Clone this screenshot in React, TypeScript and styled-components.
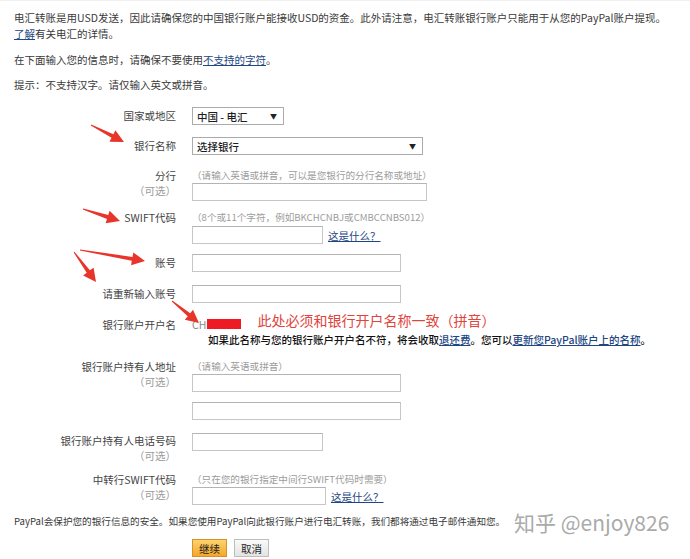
import React from "react";
import styled, { createGlobalStyle } from "styled-components";

const GlobalStyle = createGlobalStyle`
  html, body {
    margin: 0;
    padding: 0;
    background: #fff;
  }
  body {
    font-family: "Noto Sans CJK SC", "Liberation Sans", sans-serif;
    color: #333;
  }
`;

const Page = styled.div`
  position: relative;
  width: 690px;
  height: 559px;
  overflow: hidden;
  box-sizing: border-box;
  padding: 9px 14px 0;
  font-size: 10.5px;
  border-top: 1px solid #f0f0f0;
`;

const Intro = styled.p<{ $gap?: number }>`
  margin: ${(p) => p.$gap ?? 0}px 0 0;
  line-height: 16px;
  color: #3a3a3a;
`;

const TextLink = styled.a`
  color: #1d4683;
  text-decoration: underline;
  cursor: pointer;
`;

const Row = styled.div<{ $gap: number }>`
  display: grid;
  grid-template-columns: 162px 1fr;
  column-gap: 16px;
  align-items: start;
  margin-top: ${(p) => p.$gap}px;
`;

const LabelCell = styled.div`
  text-align: right;
  white-space: nowrap;
`;

const LabelText = styled.div<{ $tall?: boolean }>`
  color: #444;
  line-height: ${(p) => (p.$tall ? 18 : 15)}px;
`;

const Optional = styled.div`
  color: #9a9a9a;
  line-height: 15px;
`;

const Fields = styled.div`
  display: flex;
  flex-direction: column;
  align-items: flex-start;
`;

const Hint = styled.div`
  color: #9c9c9c;
  font-size: 9.6px;
  line-height: 15px;
  white-space: nowrap;
`;

const InputLine = styled.div<{ $gap?: number }>`
  display: flex;
  align-items: center;
  gap: 5px;
  margin-top: ${(p) => p.$gap ?? 0}px;
`;

const TextInput = styled.input<{ $w: number }>`
  box-sizing: border-box;
  width: ${(p) => p.$w}px;
  height: 18px;
  margin: 0;
  padding: 0 3px;
  border: 1px solid #c6c6c6;
  border-top-color: #b4b4b4;
  background: #fff;
  font: inherit;
  outline: none;
`;

const SelectBox = styled.div<{ $w: number }>`
  box-sizing: border-box;
  display: flex;
  align-items: center;
  justify-content: space-between;
  width: ${(p) => p.$w}px;
  height: 18px;
  padding: 0 6px 0 4px;
  border: 1px solid #ababab;
  color: #1e1e1e;
  font-weight: 500;
`;

const Caret = styled.span`
  font-size: 7px;
  color: #222;
`;

const NameLine = styled.div`
  display: flex;
  align-items: flex-start;
  line-height: 15px;
`;

const NameValue = styled.span`
  color: #8a8a8a;
`;

const Redaction = styled.span`
  display: inline-block;
  width: 34px;
  height: 10px;
  margin: 2px 0 0 -2px;
  background: #ee1b24;
`;

const RedNote = styled.span`
  margin: -5px 0 0 16px;
  font-size: 14px;
  line-height: 16px;
  color: #e0443c;
  white-space: nowrap;
`;

const Warning = styled.div`
  margin-left: 16px;
  line-height: 16px;
  font-weight: 500;
  color: #111;
  white-space: nowrap;
`;

const Footer = styled.p`
  margin: 9px 0 0;
  font-size: 9.6px;
  line-height: 15px;
  color: #3a3a3a;
`;

const Buttons = styled.div`
  display: flex;
  gap: 7px;
  margin: 10px 0 0 178px;
`;

const Button = styled.button<{ $primary?: boolean }>`
  box-sizing: border-box;
  height: 18px;
  padding: 0 6px;
  font: inherit;
  font-size: 10.5px;
  color: #222;
  border: 1px solid ${(p) => (p.$primary ? "#d8912a" : "#bdbdbd")};
  background: ${(p) =>
    p.$primary
      ? "linear-gradient(#fcd36f, #f6a727)"
      : "linear-gradient(#fafafa, #e3e3e3)"};
  cursor: pointer;
`;

const Watermark = styled.div`
  position: absolute;
  left: 514px;
  top: 506px;
  font-size: 21px;
  color: #8e8e8e;
  opacity: 0.75;
  white-space: nowrap;
`;

const Marks = styled.svg`
  position: absolute;
  top: 0;
  left: 0;
  pointer-events: none;
`;

type Pt = [number, number];

// tapered shaft plus triangular head, from tail to tip
const arrowPoints = (tail: Pt, tip: Pt) => {
  const dx = tip[0] - tail[0];
  const dy = tip[1] - tail[1];
  const len = Math.hypot(dx, dy);
  const ux = dx / len;
  const uy = dy / len;
  const nx = -uy;
  const ny = ux;
  const head = 13;
  const neck: Pt = [tip[0] - ux * head, tip[1] - uy * head];
  const at = (p: Pt, w: number): string =>
    `${(p[0] + nx * w).toFixed(1)},${(p[1] + ny * w).toFixed(1)}`;
  return [
    at(tail, 0.5),
    at(neck, 2),
    at(neck, 6.5),
    `${tip[0]},${tip[1]}`,
    at(neck, -6.5),
    at(neck, -2),
    at(tail, -0.5),
  ].join(" ");
};

const arrows: [Pt, Pt][] = [
  [[91, 124], [124, 141]],
  [[83, 208], [120, 220]],
  [[80, 249], [145, 260]],
  [[74, 251], [96, 281]],
  [[172, 300], [199, 322]],
];

type FieldRowProps = {
  gap: number;
  label: string;
  optional?: boolean;
  tall?: boolean;
  children: React.ReactNode;
};

const FieldRow = ({ gap, label, optional, tall, children }: FieldRowProps) => (
  <Row $gap={gap}>
    <LabelCell>
      <LabelText $tall={tall}>{label}</LabelText>
      {optional && <Optional>（可选）</Optional>}
    </LabelCell>
    <Fields>{children}</Fields>
  </Row>
);

export default function App() {
  return (
    <>
      <GlobalStyle />
      <Page>
        <Intro>
          电汇转账是用USD发送，因此请确保您的中国银行账户能接收USD的资金。此外请注意，电汇转账银行账户只能用于从您的PayPal账户提现。
          <br />
          <TextLink>了解</TextLink>有关电汇的详情。
        </Intro>
        <Intro $gap={10}>
          在下面输入您的信息时，请确保不要使用<TextLink>不支持的字符</TextLink>。
        </Intro>
        <Intro $gap={9}>提示：不支持汉字。请仅输入英文或拼音。</Intro>

        <FieldRow gap={14} label="国家或地区" tall>
          <SelectBox $w={92}>
            中国 - 电汇<Caret>▼</Caret>
          </SelectBox>
        </FieldRow>

        <FieldRow gap={12} label="银行名称" tall>
          <SelectBox $w={231}>
            选择银行<Caret>▼</Caret>
          </SelectBox>
        </FieldRow>

        <FieldRow gap={13} label="分行" optional>
          <Hint>（请输入英语或拼音，可以是您银行的分行名称或地址）</Hint>
          <TextInput $w={235} />
        </FieldRow>

        <FieldRow gap={9} label="SWIFT代码">
          <Hint>（8个或11个字符，例如BKCHCNBJ或CMBCCNBS012）</Hint>
          <InputLine $gap={1}>
            <TextInput $w={131} />
            <TextLink>这是什么？</TextLink>
          </InputLine>
        </FieldRow>

        <FieldRow gap={10} label="账号" tall>
          <TextInput $w={209} />
        </FieldRow>

        <FieldRow gap={13} label="请重新输入账号" tall>
          <TextInput $w={209} />
        </FieldRow>

        <FieldRow gap={14} label="银行账户开户名">
          <NameLine>
            <NameValue>CHI</NameValue>
            <Redaction />
            <RedNote>此处必须和银行开户名称一致（拼音）</RedNote>
          </NameLine>
          <Warning>
            如果此名称与您的银行账户开户名不符，将会收取<TextLink>退还费</TextLink>。您可以
            <TextLink>更新您PayPal账户上的名称</TextLink>。
          </Warning>
        </FieldRow>

        <FieldRow gap={11} label="银行账户持有人地址" optional>
          <Hint>（请输入英语或拼音）</Hint>
          <TextInput $w={209} />
          <InputLine $gap={10}>
            <TextInput $w={209} />
          </InputLine>
        </FieldRow>

        <FieldRow gap={13} label="银行账户持有人电话号码" optional>
          <TextInput $w={131} />
        </FieldRow>

        <FieldRow gap={9} label="中转行SWIFT代码" optional>
          <Hint>（只在您的银行指定中间行SWIFT代码时需要）</Hint>
          <InputLine>
            <TextInput $w={134} />
            <TextLink>这是什么？</TextLink>
          </InputLine>
        </FieldRow>

        <Footer>
          PayPal会保护您的银行信息的安全。如果您使用PayPal向此银行账户进行电汇转账，我们都将通过电子邮件通知您。
        </Footer>

        <Buttons>
          <Button $primary>继续</Button>
          <Button>取消</Button>
        </Buttons>

        <Watermark>知乎 @enjoy826</Watermark>

        <Marks width={690} height={559}>
          {arrows.map(([tail, tip], i) => (
            <polygon key={i} points={arrowPoints(tail, tip)} fill="#e8352b" />
          ))}
        </Marks>
      </Page>
    </>
  );
}
